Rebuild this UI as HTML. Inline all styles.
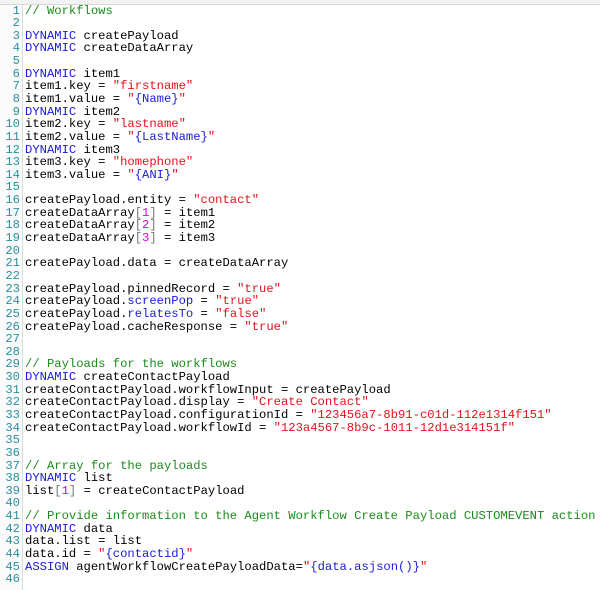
<!DOCTYPE html>
<html><head><style>
html,body{margin:0;padding:0;background:#fff;width:600px;height:590px;overflow:hidden}
.top{position:absolute;left:0;top:0;width:600px;height:4px;background:#f2f2f2;border-bottom:1px solid #d8d8d8}
.gut{position:absolute;left:0;top:5px;width:22px;height:585px;background:#fbfbfb;border-right:1px solid #cfe3d6}
pre{position:absolute;left:0;top:4.5px;margin:0;font-family:"Liberation Mono",monospace;font-size:12.2px;line-height:12.64px;color:#000}
.n{display:inline-block;width:20px;text-align:right;color:#2b8fa0;margin-right:5px}
.k{color:#1a1adb}.s{color:#e3121b}.c{color:#1a8c1a}.m{color:#e000e0}.b{color:#1a1adb}.g{color:#777}
</style></head><body>
<div class="top"></div><div class="gut"></div>
<pre><span class="n">1</span><span class="c">// Workflows</span>
<span class="n">2</span>
<span class="n">3</span><span class="k">DYNAMIC</span> createPayload
<span class="n">4</span><span class="k">DYNAMIC</span> createDataArray
<span class="n">5</span>
<span class="n">6</span><span class="k">DYNAMIC</span> item1
<span class="n">7</span>item1.key = <span class="s">"firstname"</span>
<span class="n">8</span>item1.value = <span class="s">"</span><span class="b">{Name}</span><span class="s">"</span>
<span class="n">9</span><span class="k">DYNAMIC</span> item2
<span class="n">10</span>item2.key = <span class="s">"lastname"</span>
<span class="n">11</span>item2.value = <span class="s">"</span><span class="b">{LastName}</span><span class="s">"</span>
<span class="n">12</span><span class="k">DYNAMIC</span> item3
<span class="n">13</span>item3.key = <span class="s">"homephone"</span>
<span class="n">14</span>item3.value = <span class="s">"</span><span class="b">{ANI}</span><span class="s">"</span>
<span class="n">15</span>
<span class="n">16</span>createPayload.entity = <span class="s">"contact"</span>
<span class="n">17</span>createDataArray<span class="g">[</span><span class="m">1</span><span class="g">]</span> = item1
<span class="n">18</span>createDataArray<span class="g">[</span><span class="m">2</span><span class="g">]</span> = item2
<span class="n">19</span>createDataArray<span class="g">[</span><span class="m">3</span><span class="g">]</span> = item3
<span class="n">20</span>
<span class="n">21</span>createPayload.data = createDataArray
<span class="n">22</span>
<span class="n">23</span>createPayload.pinnedRecord = <span class="s">"true"</span>
<span class="n">24</span>createPayload.<span class="b">screenPop</span> = <span class="s">"true"</span>
<span class="n">25</span>createPayload.<span class="b">relatesTo</span> = <span class="s">"false"</span>
<span class="n">26</span>createPayload.cacheResponse = <span class="s">"true"</span>
<span class="n">27</span>
<span class="n">28</span>
<span class="n">29</span><span class="c">// Payloads for the workflows</span>
<span class="n">30</span><span class="k">DYNAMIC</span> createContactPayload
<span class="n">31</span>createContactPayload.workflowInput = createPayload
<span class="n">32</span>createContactPayload.display = <span class="s">"Create Contact"</span>
<span class="n">33</span>createContactPayload.configurationId = <span class="s">"123456a7-8b91-c01d-112e1314f151"</span>
<span class="n">34</span>createContactPayload.workflowId = <span class="s">"123a4567-8b9c-1011-12d1e314151f"</span>
<span class="n">35</span>
<span class="n">36</span>
<span class="n">37</span><span class="c">// Array for the payloads</span>
<span class="n">38</span><span class="k">DYNAMIC</span> list
<span class="n">39</span>list<span class="g">[</span><span class="m">1</span><span class="g">]</span> = createContactPayload
<span class="n">40</span>
<span class="n">41</span><span class="c">// Provide information to the Agent Workflow Create Payload CUSTOMEVENT action</span>
<span class="n">42</span><span class="k">DYNAMIC</span> data
<span class="n">43</span>data.list = list
<span class="n">44</span>data.id = <span class="s">"</span><span class="b">{contactid}</span><span class="s">"</span>
<span class="n">45</span><span class="k">ASSIGN</span> agentWorkflowCreatePayloadData=<span class="s">"</span><span class="b">{data.asjson()}</span><span class="s">"</span>
<span class="n">46</span>
</pre>
</body></html>
